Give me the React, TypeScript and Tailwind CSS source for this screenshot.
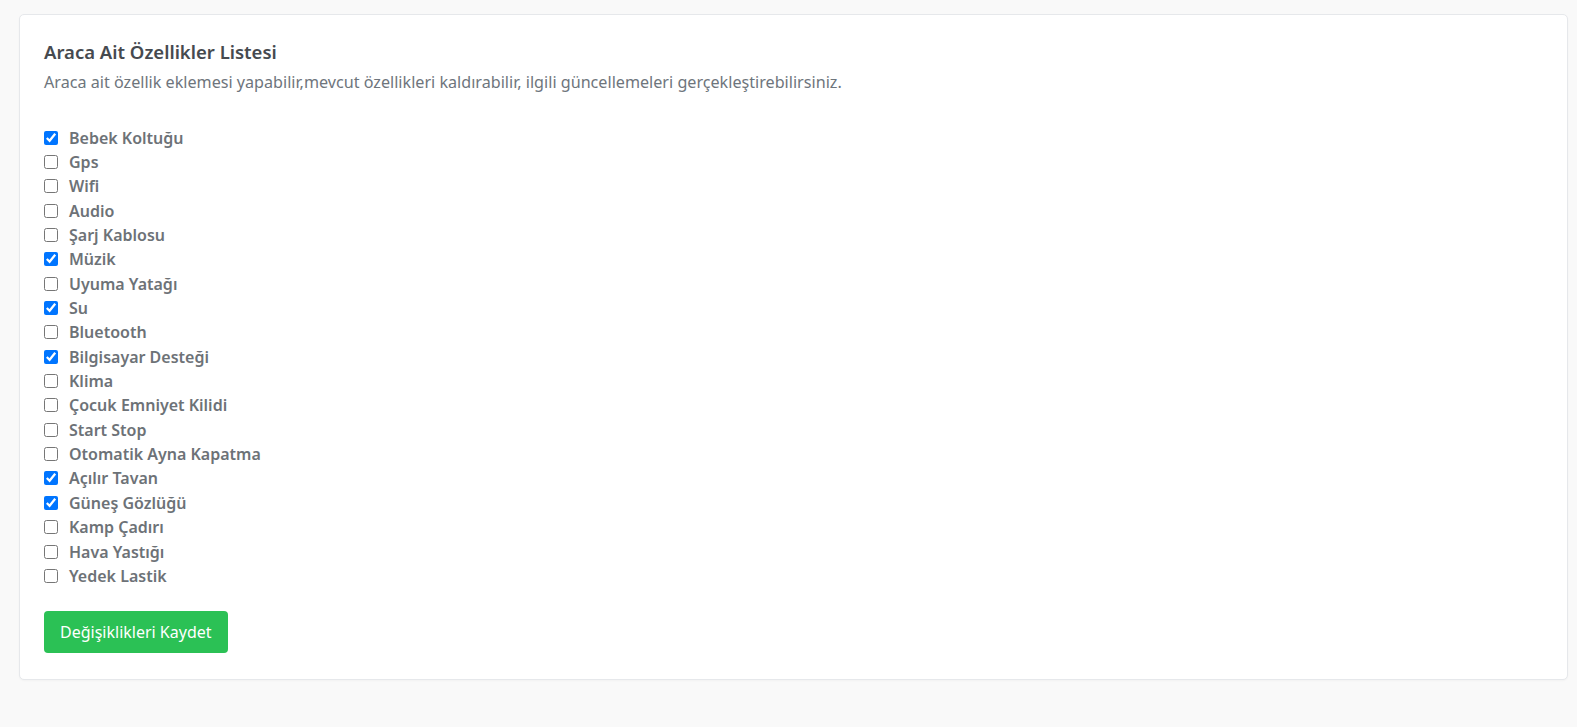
import { useState } from "react"

const features = [
  { name: "Bebek Koltuğu", checked: true },
  { name: "Gps", checked: false },
  { name: "Wifi", checked: false },
  { name: "Audio", checked: false },
  { name: "Şarj Kablosu", checked: false },
  { name: "Müzik", checked: true },
  { name: "Uyuma Yatağı", checked: false },
  { name: "Su", checked: true },
  { name: "Bluetooth", checked: false },
  { name: "Bilgisayar Desteği", checked: true },
  { name: "Klima", checked: false },
  { name: "Çocuk Emniyet Kilidi", checked: false },
  { name: "Start Stop", checked: false },
  { name: "Otomatik Ayna Kapatma", checked: false },
  { name: "Açılır Tavan", checked: true },
  { name: "Güneş Gözlüğü", checked: true },
  { name: "Kamp Çadırı", checked: false },
  { name: "Hava Yastığı", checked: false },
  { name: "Yedek Lastik", checked: false },
]

export default function App() {
  const [items, setItems] = useState(features)

  const toggle = (i: number) =>
    setItems((prev) => prev.map((f, idx) => (idx === i ? { ...f, checked: !f.checked } : f)))

  return (
    <div className="min-h-[727px] bg-[#f9f9f9] pt-[14px] pl-[19px] pr-[9px] font-['Noto_Sans',sans-serif]">
      <div className="rounded-[5px] border border-[#e6e8eb] bg-white px-[24px] pt-[23px] pb-[26px] shadow-[0_1px_2px_rgba(0,0,0,0.03)]">
        <h4 className="text-[18.5px] leading-[27px] font-semibold text-[#464a4f]">Araca Ait Özellikler Listesi</h4>
        <p className="mt-[6px] text-[16.15px] leading-[22.5px] text-[#6e757c]">
          Araca ait özellik eklemesi yapabilir,mevcut özellikleri kaldırabilir, ilgili güncellemeleri gerçekleştirebilirsiniz.
        </p>

        <div className="mt-[32px] flex flex-col">
          {items.map((f, i) => (
            <label key={f.name} className="flex h-[24.35px] items-center">
              <input
                type="checkbox"
                checked={f.checked}
                onChange={() => toggle(i)}
                className="h-[14px] w-[14px]"
              />
              <span className="ml-[11px] text-[16px] font-semibold text-[#6d7277]">{f.name}</span>
            </label>
          ))}
        </div>

        <button className="mt-[23px] h-[42px] rounded-[4px] bg-[#2bc155] px-[16px] text-[16px] text-white">
          Değişiklikleri Kaydet
        </button>
      </div>
    </div>
  )
}
